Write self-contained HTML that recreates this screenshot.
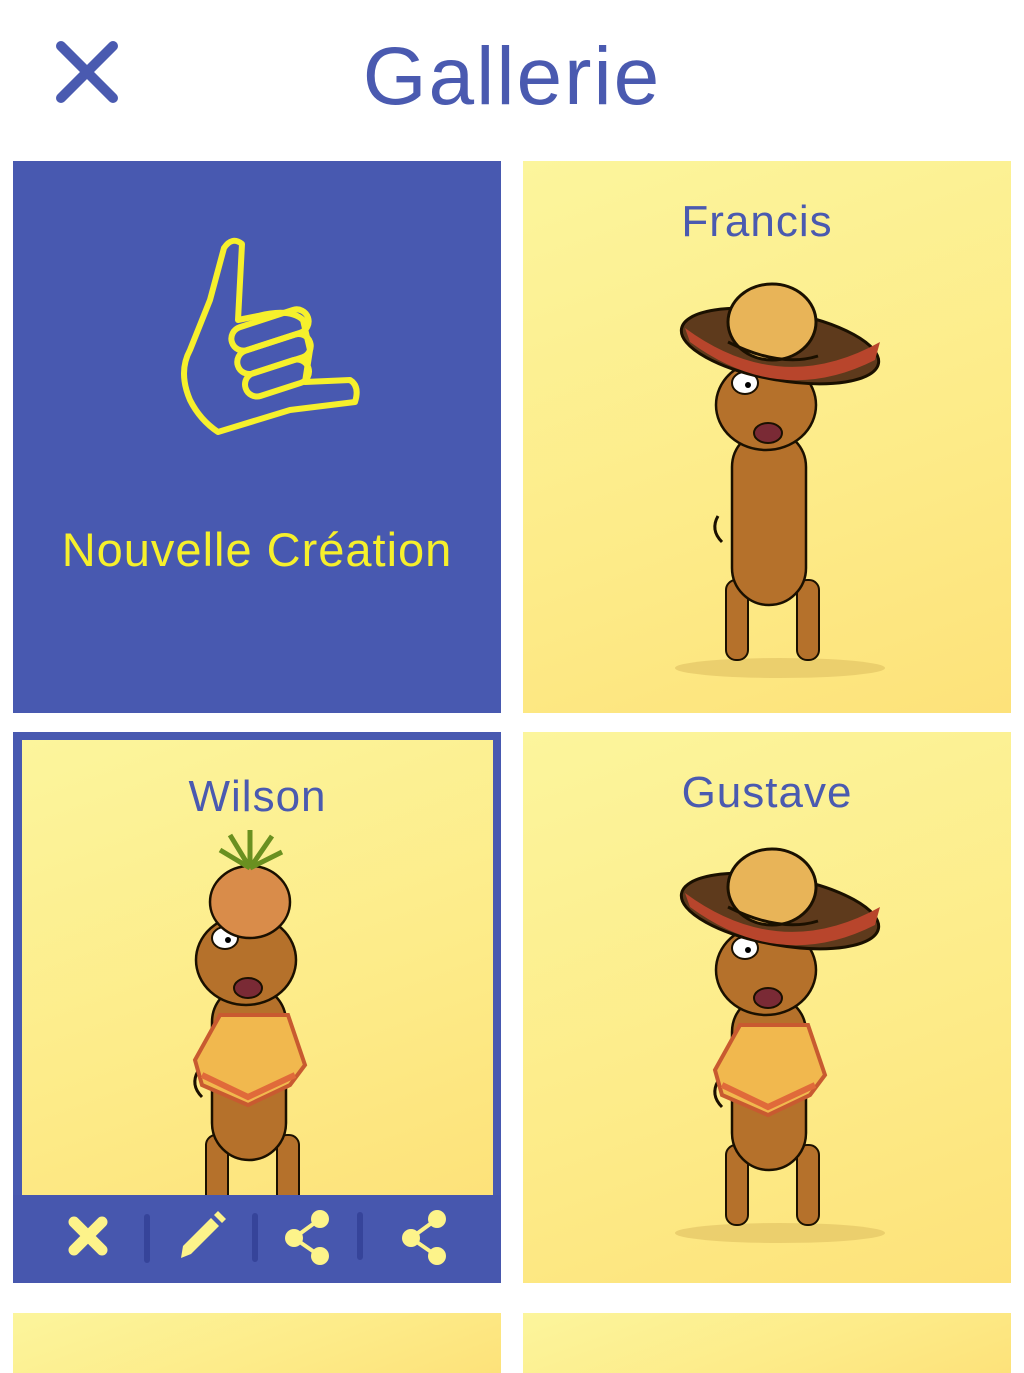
<!DOCTYPE html>
<html><head><meta charset="utf-8"><style>
body{margin:0;width:1024px;height:1365px;background:#fff;position:relative;overflow:hidden;font-family:"Liberation Sans",sans-serif}
.card{position:absolute;background:linear-gradient(160deg,#fcf59c 0%,#fdeb88 60%,#fde27a 100%)}
.t{position:absolute;left:0;right:0;text-align:center;color:#4a5ab0;font-size:44px;letter-spacing:1px}
svg{position:absolute}
</style></head><body>
<svg style="left:55px;top:40px" width="64" height="64"><path d="M6 6L58 58M58 6L6 58" stroke="#4a5ab0" stroke-width="10" stroke-linecap="round"/></svg>
<div style="position:absolute;left:0;right:0;top:30px;text-align:center;font-size:82px;color:#4a5ab0;letter-spacing:2px">Gallerie</div>

<div style="position:absolute;left:13px;top:161px;width:488px;height:552px;background:#4859b0"></div>
<svg style="left:0;top:0" width="520" height="720">
<g fill="none" stroke="#f6f02c" stroke-width="6" stroke-linejoin="round" stroke-linecap="round">
<path d="M224 248Q232 236 242 244L238 320L258 316Q290 308 303 320L310 350L305 382L350 380Q360 386 355 402L290 410L218 432Q200 420 190 400Q178 372 190 350L210 300Z"/>
<rect x="230" y="318" width="80" height="24" rx="12" transform="rotate(-18 270 330)"/>
<rect x="236" y="342" width="76" height="24" rx="12" transform="rotate(-18 274 354)"/>
<rect x="244" y="366" width="66" height="24" rx="12" transform="rotate(-18 277 378)"/>
</g></svg>
<div style="position:absolute;left:13px;width:488px;top:522px;text-align:center;color:#f6f02c;font-size:47px;letter-spacing:1px">Nouvelle Création</div>

<div class="card" style="left:523px;top:161px;width:488px;height:552px"><div class="t" style="top:36px;right:20px">Francis</div></div>
<div class="card" style="left:13px;top:732px;width:488px;height:551px;background:#4859b0"></div>
<div class="card" style="left:22px;top:740px;width:471px;height:455px"><div class="t" style="top:32px">Wilson</div></div>
<div class="card" style="left:523px;top:732px;width:488px;height:551px"><div class="t" style="top:36px">Gustave</div></div>
<div class="card" style="left:13px;top:1313px;width:488px;height:60px"></div>
<div class="card" style="left:523px;top:1313px;width:488px;height:60px"></div>

<svg width="0" height="0"><defs>
<g id="dog">
<ellipse cx="120" cy="388" rx="105" ry="10" fill="#e0c060" opacity=".6"/>
<path d="M62 262Q50 250 58 236" stroke="#1a1000" stroke-width="3" fill="none"/>
<rect x="66" y="300" width="22" height="80" rx="10" fill="#b5712b" stroke="#1a1000" stroke-width="2"/>
<rect x="137" y="300" width="22" height="80" rx="10" fill="#b5712b" stroke="#1a1000" stroke-width="2"/>
<rect x="72" y="150" width="74" height="175" rx="37" fill="#b5712b" stroke="#1a1000" stroke-width="2.5"/>
<ellipse cx="106" cy="125" rx="50" ry="45" fill="#b5712b" stroke="#1a1000" stroke-width="2.5"/>
<ellipse cx="85" cy="103" rx="13" ry="11" fill="#fff" stroke="#1a1000" stroke-width="2"/>
<circle cx="88" cy="105" r="3" fill="#000"/>
<ellipse cx="108" cy="153" rx="14" ry="10" fill="#7a2a35" stroke="#1a1000" stroke-width="2"/>
</g>
<g id="hat">
<ellipse cx="120" cy="66" rx="100" ry="34" transform="rotate(10 120 66)" fill="#5e3a1c" stroke="#1a1000" stroke-width="3"/>
<path d="M25 48Q120 118 220 62L215 80Q120 128 30 62Z" fill="#b8452c"/>
<ellipse cx="112" cy="42" rx="44" ry="38" fill="#e8b458" stroke="#1a1000" stroke-width="3"/>
<path d="M68 62Q120 88 158 76" stroke="#1a1000" stroke-width="3" fill="none"/>
</g>
<g id="poncho">
<path d="M80 180L148 180L165 230L150 250L108 270L62 250L55 225Z" fill="#f1b84e" stroke="#c85a30" stroke-width="4"/>
<path d="M62 240L108 262L155 240" stroke="#e06a3a" stroke-width="6" fill="none"/>
</g>
</defs></svg>
<svg style="left:660px;top:280px" width="240" height="400"><use href="#dog"/><use href="#hat"/></svg>
<svg style="left:660px;top:845px" width="240" height="400"><use href="#dog"/><use href="#poncho"/><use href="#hat"/></svg>
<svg style="left:140px;top:830px" width="240" height="365"><g transform="translate(0,5)"><use href="#dog"/><use href="#poncho"/></g>
<ellipse cx="110" cy="72" rx="40" ry="36" fill="#d98c4a" stroke="#1a1000" stroke-width="2.5"/>
<path d="M110 38L90 5M110 38L110 0M110 38L132 6M110 38L80 20M110 38L142 22" stroke="#6a9020" stroke-width="5"/></svg>

<div style="position:absolute;left:13px;top:1195px;width:488px;height:88px;background:#4757ae"></div>
<svg style="left:13px;top:1180px" width="488" height="110" fill="#fdf38a">
<path d="M61 42L89 70M89 42L61 70" stroke="#fdf38a" stroke-width="11" stroke-linecap="round"/>
<g stroke="#36449a" stroke-width="6" stroke-linecap="round"><path d="M134 37V80M242 36V79M347 35V77"/></g>
<path d="M168 78L170 66L198 38L206 46L178 74Z"/><path d="M201 35L205 31L213 39L209 43Z"/>
<g stroke="#fdf38a" stroke-width="4"><path d="M281 58L307 39M281 58L307 76M398 58L424 39M398 58L424 76"/></g>
<circle cx="281" cy="58" r="9"/><circle cx="307" cy="39" r="9"/><circle cx="307" cy="76" r="9"/>
<circle cx="398" cy="58" r="9"/><circle cx="424" cy="39" r="9"/><circle cx="424" cy="76" r="9"/>
</svg>
</body></html>
